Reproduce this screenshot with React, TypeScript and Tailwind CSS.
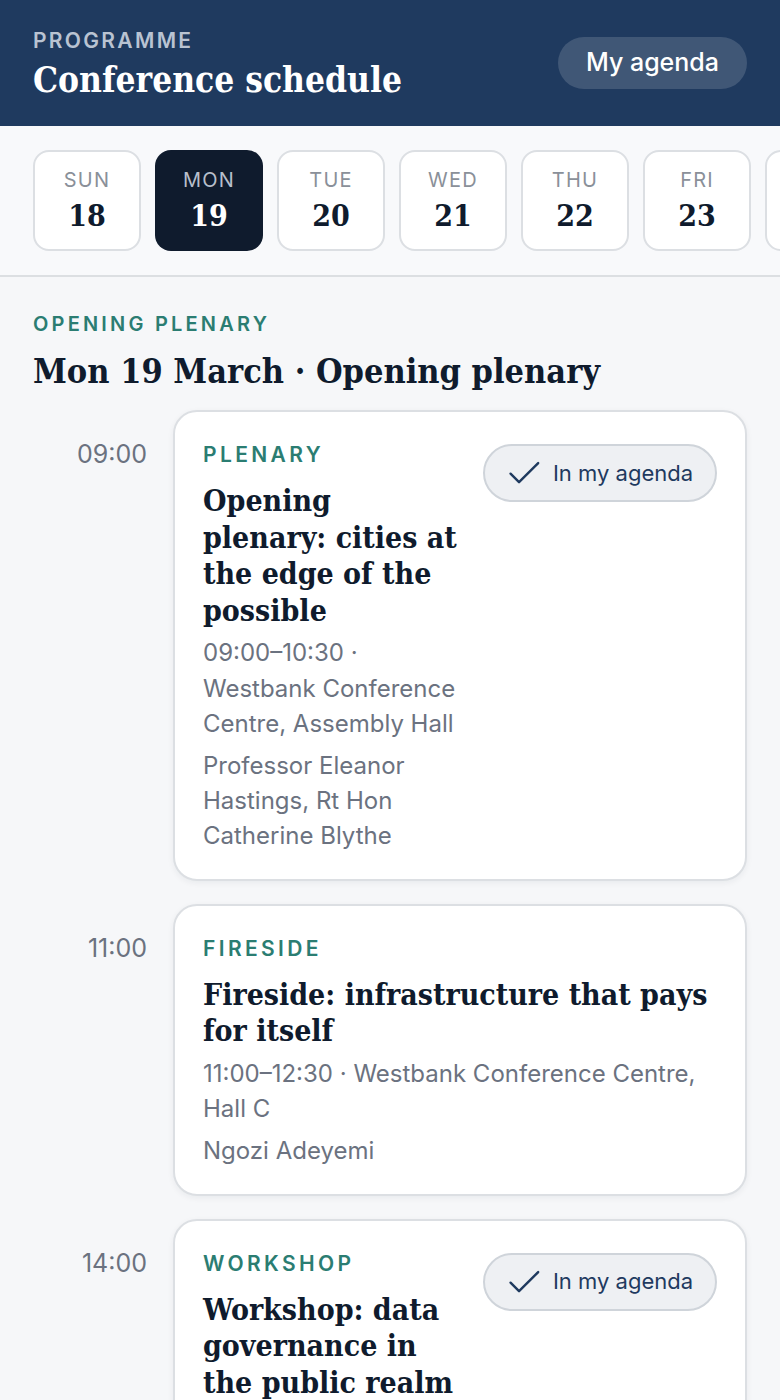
import React, { useState } from 'react';

const serif = "font-['DejaVu_Serif_Condensed','DejaVu_Serif',serif]";

const days = [
  { d: 'SUN', n: 18 },
  { d: 'MON', n: 19 },
  { d: 'TUE', n: 20 },
  { d: 'WED', n: 21 },
  { d: 'THU', n: 22 },
  { d: 'FRI', n: 23 },
  { d: 'SAT', n: 24 },
];

const sessions = [
  {
    time: '09:00',
    kind: 'PLENARY',
    title: 'Opening plenary: cities at the edge of the possible',
    meta: '09:00–10:30 · Westbank Conference Centre, Assembly Hall',
    speakers: 'Professor Eleanor Hastings, Rt Hon Catherine Blythe',
    saved: true,
  },
  {
    time: '11:00',
    kind: 'FIRESIDE',
    title: 'Fireside: infrastructure that pays for itself',
    meta: '11:00–12:30 · Westbank Conference Centre, Hall C',
    speakers: 'Ngozi Adeyemi',
    saved: false,
  },
  {
    time: '14:00',
    kind: 'WORKSHOP',
    title: 'Workshop: data governance in the public realm',
    meta: '14:00–15:30 · Westbank Conference Centre, Room 4',
    speakers: 'Dr Tomasz Wiśniewski',
    saved: true,
  },
];

const Check = () => (
  <svg width="34" height="34" viewBox="0 0 24 24" fill="none" stroke="currentColor" strokeWidth="1.7" strokeLinecap="round" strokeLinejoin="round">
    <path d="M2.5 12.5l6 6L22 5" />
  </svg>
);

const SessionCard = ({ s }: { s: (typeof sessions)[number] }) => (
  <div className="flex gap-[26px]">
    <div className="w-[114px] shrink-0 text-right pt-[28px] text-[25px] leading-[32px] text-[#6b7280]">{s.time}</div>
    <div className="flex-1 bg-white rounded-[24px] border-2 border-[#dcdfe3] shadow-[0_2px_6px_rgba(15,27,45,0.06)] px-[28px] pt-[28px] pb-[26px] flex gap-[20px]">
      <div className="flex-1 min-w-0">
        <div className="text-[21px] leading-[30px] font-semibold tracking-[0.16em] text-[#2b7d72]">{s.kind}</div>
        <h3 className={`${serif} mt-[13px] text-[30px] leading-[36.5px] font-bold text-[#0f1b2d]`}>{s.title}</h3>
        <p className="mt-[6px] text-[24px] leading-[35.5px] text-[#6b7280]">{s.meta}</p>
        <p className="mt-[6px] text-[24px] leading-[35px] text-[#6b7280]">{s.speakers}</p>
      </div>
      {s.saved && (
        <button className="shrink-0 self-start mt-[4px] h-[58px] w-[234px] rounded-full border-2 border-[#cfd4da] bg-[#eef0f3] flex items-center justify-center gap-[12px] text-[22px] text-[#1f3a5f]">
          <Check />
          <span>In my agenda</span>
        </button>
      )}
    </div>
  </div>
);

export default function App() {
  const [active, setActive] = useState(19);

  return (
    <div className="min-h-[1400px] bg-[#f6f7f9] font-['Inter',sans-serif]">
      <header className="bg-[#1f3a5f] h-[126px] px-[33px] flex items-center justify-between">
        <div className="pt-[5px]">
          <div className="text-[21px] leading-[24px] font-semibold tracking-[0.11em] text-[#b9c3d2]">PROGRAMME</div>
          <h1 className={`${serif} mt-[5px] text-[35px] leading-[44px] font-bold text-white`}>Conference schedule</h1>
        </div>
        <button className="h-[52px] px-[28px] rounded-full bg-white/15 text-white text-[25px] font-medium">My agenda</button>
      </header>

      <nav className="bg-[#f8f9fb] border-b-2 border-[#dcdfe2] py-[24px] pl-[33px] flex gap-[14px] overflow-hidden">
        {days.map((day) => {
          const on = day.n === active;
          return (
            <button
              key={day.n}
              onClick={() => setActive(day.n)}
              className={`shrink-0 w-[108px] h-[101px] rounded-[16px] flex flex-col items-center justify-center gap-[4px] ${
                on ? 'bg-[#0f1b2d] text-white' : 'bg-white border-2 border-[#dcdfe3] text-[#0f1b2d]'
              }`}
            >
              <span className={`text-[20px] leading-[26px] tracking-[0.06em] ${on ? 'text-[#b7bfcb]' : 'text-[#8a9099]'}`}>{day.d}</span>
              <span className={`${serif} text-[30px] leading-[38px] font-bold`}>{day.n}</span>
            </button>
          );
        })}
      </nav>

      <main className="px-[33px] pt-[34px]">
        <div className="text-[20px] leading-[26px] font-semibold tracking-[0.16em] text-[#2b7d72]">OPENING PLENARY</div>
        <h2 className={`${serif} mt-[14px] text-[34px] leading-[40px] font-bold text-[#0f1b2d]`}>Mon 19 March · Opening plenary</h2>
        <div className="mt-[19px] flex flex-col gap-[23px]">
          {sessions.map((s) => (
            <SessionCard key={s.time} s={s} />
          ))}
        </div>
      </main>
    </div>
  );
}
